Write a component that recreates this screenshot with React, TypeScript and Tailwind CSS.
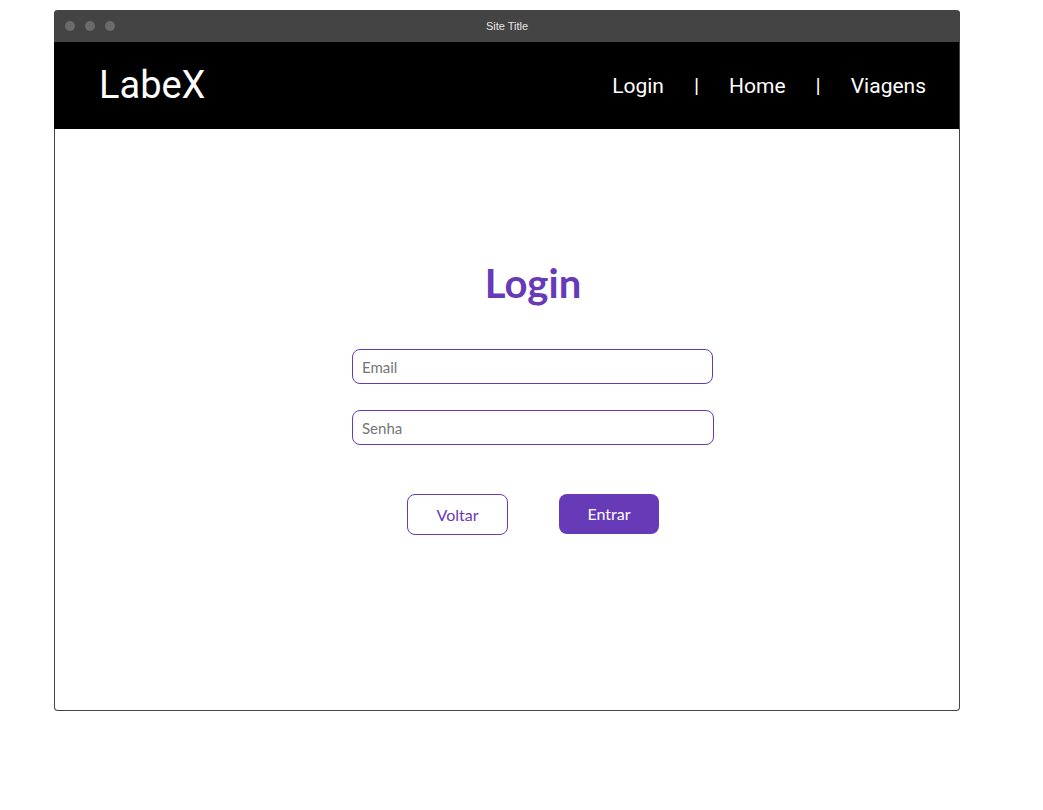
import { useState } from "react";

const PURPLE = "text-[#673ab7]";

function TitleBar() {
  return (
    <div className="relative flex h-8 items-center rounded-t-[4px] bg-[#444444] px-[11px]">
      <div className="flex gap-[10px]">
        <span className="h-[10px] w-[10px] rounded-full bg-[#6b6b6b]" />
        <span className="h-[10px] w-[10px] rounded-full bg-[#6b6b6b]" />
        <span className="h-[10px] w-[10px] rounded-full bg-[#6b6b6b]" />
      </div>
      <span className="absolute inset-x-0 text-center font-['Liberation_Sans',Arial,sans-serif] text-[11px] text-[#e6e6e6]">
        Site Title
      </span>
    </div>
  );
}

function Header() {
  const links = ["Login", "Home", "Viagens"];
  return (
    <header className="flex h-[87px] items-center justify-between bg-black pl-[45px] pr-[33px] font-['Roboto',sans-serif] text-white">
      <span className="pb-[2px] text-[38px] leading-none">LabeX</span>
      <nav className="flex items-center gap-[30px] pt-[2px] text-[21px]">
        {links.map((l, i) => (
          <span key={l} className="flex items-center gap-[30px]">
            {i > 0 && <span>|</span>}
            <a href="#">{l}</a>
          </span>
        ))}
      </nav>
    </header>
  );
}

export default function App() {
  const [email, setEmail] = useState("");
  const [senha, setSenha] = useState("");

  return (
    <div className="min-h-[810px] bg-white pl-[54px] pt-[10px]">
      <div className="flex h-[701px] w-[906px] flex-col rounded-[4px] border border-t-0 border-[#444444]">
        <div className="-mx-px">
          <TitleBar />
        </div>
        <div className="-ml-px">
          <Header />
        </div>
        <main className="flex flex-col items-center pl-[52px] pt-[130px] font-['Source_Sans_Pro',Lato,sans-serif]">
          <h1 className={`text-[40px] font-bold leading-[48px] ${PURPLE}`}>Login</h1>
          <div className="mt-[42px] flex flex-col gap-[26px]">
            <input
              className="h-[35px] w-[361px] rounded-lg border border-[#673ab7] px-[9px] text-[15px] text-gray-700 outline-none placeholder:text-[#757575]"
              placeholder="Email"
              value={email}
              onChange={(e) => setEmail(e.target.value)}
            />
            <input
              type="password"
              className="h-[35px] w-[362px] rounded-lg border border-[#673ab7] px-[9px] text-[15px] text-gray-700 outline-none placeholder:text-[#757575]"
              placeholder="Senha"
              value={senha}
              onChange={(e) => setSenha(e.target.value)}
            />
          </div>
          <div className="mt-[49px] flex gap-[51px]">
            <button
              className={`h-[41px] w-[101px] rounded-lg border border-[#673ab7] bg-white text-[16px] ${PURPLE}`}
            >
              Voltar
            </button>
            <button className="h-[40px] w-[100px] rounded-lg bg-[#673ab7] text-[16px] text-white">
              Entrar
            </button>
          </div>
        </main>
      </div>
    </div>
  );
}
